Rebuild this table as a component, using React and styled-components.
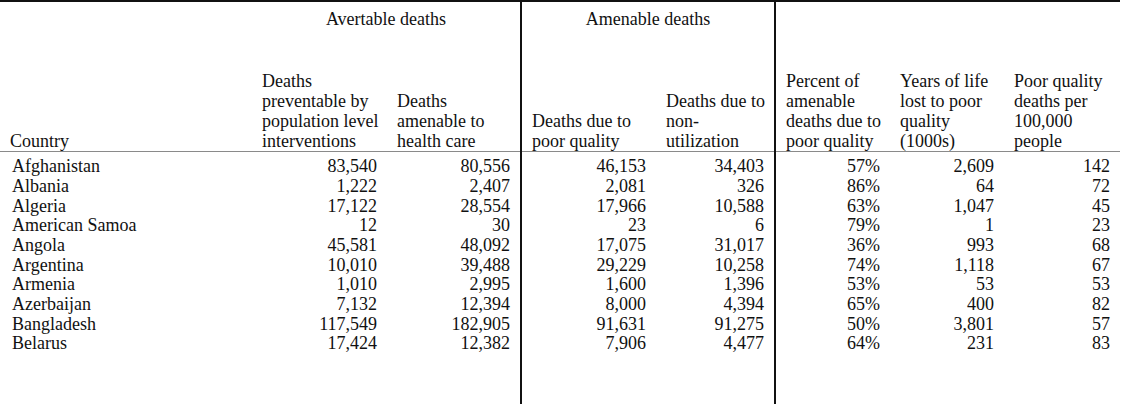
import styled, { createGlobalStyle } from "styled-components"

const Global = createGlobalStyle`
  body {
    margin: 0;
    background: #fff;
    color: #111;
    font-family: "Liberation Serif", "Times New Roman", serif;
  }
`

const Table = styled.table`
  border-collapse: collapse;
  table-layout: fixed;
  width: 1120px;
  font-size: 18px;
  line-height: 19.67px;
  border-top: 2px solid #111;
`

const HeadCell = styled.th`
  font-weight: normal;
  text-align: ${p => (p.center ? "center" : "left")};
  vertical-align: ${p => (p.group ? "top" : "bottom")};
  padding: ${p => (p.group ? "8px 10px 6px" : "0 0 0 10px")};
  height: ${p => (p.group ? "32px" : "116px")};
  border-left: ${p => (p.divide ? "2px solid #111" : "none")};
  border-bottom: ${p => (p.group ? "none" : "1px solid #8a8a8a")};
  box-sizing: border-box;
  white-space: nowrap;
`

const HeadLine = styled.div`
  white-space: nowrap;
`

const Cell = styled.td`
  text-align: ${p => (p.num ? "right" : "left")};
  padding: ${p => (p.first ? "5px" : "0")} ${p => (p.num ? "10px" : "0")} 0
    ${p => (p.num ? "0" : "12px")};
  border-left: ${p => (p.divide ? "2px solid #111" : "none")};
  white-space: nowrap;
`

const Filler = styled.td`
  height: 52px;
  border-left: ${p => (p.divide ? "2px solid #111" : "none")};
`

const widths = [252, 135, 134, 135, 119, 115, 114, 116]
const dividers = [3, 5]

const heads = [
  ["Country"],
  ["Deaths", "preventable by", "population level", "interventions"],
  ["Deaths", "amenable to", "health care"],
  ["Deaths due to", "poor quality"],
  ["Deaths due to", "non-", "utilization"],
  ["Percent of", "amenable", "deaths due to", "poor quality"],
  ["Years of life", "lost to poor", "quality", "(1000s)"],
  ["Poor quality", "deaths per", "100,000", "people"],
]

const rows = [
  ["Afghanistan", "83,540", "80,556", "46,153", "34,403", "57%", "2,609", "142"],
  ["Albania", "1,222", "2,407", "2,081", "326", "86%", "64", "72"],
  ["Algeria", "17,122", "28,554", "17,966", "10,588", "63%", "1,047", "45"],
  ["American Samoa", "12", "30", "23", "6", "79%", "1", "23"],
  ["Angola", "45,581", "48,092", "17,075", "31,017", "36%", "993", "68"],
  ["Argentina", "10,010", "39,488", "29,229", "10,258", "74%", "1,118", "67"],
  ["Armenia", "1,010", "2,995", "1,600", "1,396", "53%", "53", "53"],
  ["Azerbaijan", "7,132", "12,394", "8,000", "4,394", "65%", "400", "82"],
  ["Bangladesh", "117,549", "182,905", "91,631", "91,275", "50%", "3,801", "57"],
  ["Belarus", "17,424", "12,382", "7,906", "4,477", "64%", "231", "83"],
]

const App = () => {
  return (
    <>
      <Global />
      <Table>
        <colgroup>
          {widths.map((w, i) => (
            <col key={i} style={{ width: w }} />
          ))}
        </colgroup>
        <thead>
          <tr>
            <HeadCell group />
            <HeadCell group center colSpan={2}>
              Avertable deaths
            </HeadCell>
            <HeadCell group center divide colSpan={2}>
              Amenable deaths
            </HeadCell>
            <HeadCell group divide colSpan={3} />
          </tr>
          <tr>
            {heads.map((lines, i) => (
              <HeadCell key={i} divide={dividers.includes(i)}>
                {lines.map((line, j) => (
                  <HeadLine key={j}>{line}</HeadLine>
                ))}
              </HeadCell>
            ))}
          </tr>
        </thead>
        <tbody>
          {rows.map((r, rIdx) => (
            <tr key={rIdx}>
              {r.map((v, cIdx) => (
                <Cell
                  key={cIdx}
                  num={cIdx > 0}
                  first={rIdx === 0}
                  divide={dividers.includes(cIdx)}
                >
                  {v}
                </Cell>
              ))}
            </tr>
          ))}
          <tr>
            {widths.map((w, i) => (
              <Filler key={i} divide={dividers.includes(i)} />
            ))}
          </tr>
        </tbody>
      </Table>
    </>
  )
}

export default App
